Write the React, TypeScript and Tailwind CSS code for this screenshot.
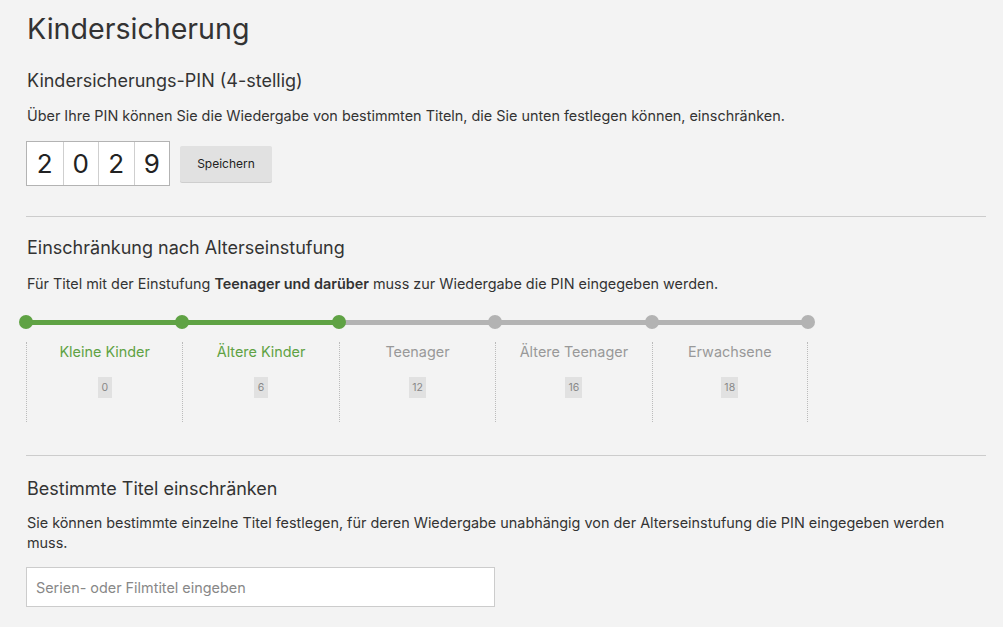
import React from "react";

const levels = [
  { label: "Kleine Kinder", age: "0", active: true },
  { label: "Ältere Kinder", age: "6", active: true },
  { label: "Teenager", age: "12", active: true },
  { label: "Ältere Teenager", age: "16", active: false },
  { label: "Erwachsene", age: "18", active: false },
];

export default function App() {
  return (
    <div className="min-h-[627px] bg-[#f3f3f3] text-[#333] font-['Inter',sans-serif]">
      <div className="w-[960px] ml-[26px] pt-[9px]">
        <h1 className="text-[28.6px] leading-[40px] font-normal text-[#333] ml-[1px]">Kindersicherung</h1>
        <h2 className="mt-[20px] text-[18px] leading-[24px] font-normal ml-[1px]">Kindersicherungs-PIN (4-stellig)</h2>
        <p className="mt-[13px] text-[14.4px] leading-[20px] ml-[1px]">
          Über Ihre PIN können Sie die Wiedergabe von bestimmten Titeln, die Sie unten festlegen können, einschränken.
        </p>
        <div className="mt-[15px] flex items-center">
          <div className="flex border border-[#b3b3b3] bg-white h-[45px]">
            {["2", "0", "2", "9"].map((d, i) => (
              <div
                key={i}
                className={`w-[35.5px] flex items-center justify-center text-[26px] text-[#222] ${i > 0 ? "border-l border-[#cfcfcf]" : ""}`}
              >
                {d}
              </div>
            ))}
          </div>
          <button className="ml-[10px] w-[92px] h-[36px] bg-[#e1e1e1] text-[12px] text-[#222] rounded-[2px] shadow-[0_1px_0_rgba(0,0,0,0.15)]">
            Speichern
          </button>
        </div>

        <div className="mt-[30px] border-t border-[#cccccc]" />

        <h2 className="mt-[19px] text-[18px] leading-[24px] font-normal ml-[1px]">Einschränkung nach Alterseinstufung</h2>
        <p className="mt-[14px] text-[14.4px] leading-[20px] ml-[1px]">
          Für Titel mit der Einstufung <b className="font-semibold">Teenager und darüber</b> muss zur Wiedergabe die PIN eingegeben werden.
        </p>

        <div className="mt-[21px] w-[782px] relative">
          <div className="h-[14px] relative">
            <div className="absolute left-0 right-0 top-[5px] h-[5px] bg-[#b3b3b3]" />
            <div className="absolute left-0 w-[313px] top-[5px] h-[5px] bg-[#5fa244]" />
            {[0, 1, 2, 3, 4, 5].map((i) => (
              <div
                key={i}
                className={`absolute top-0 w-[14px] h-[14px] rounded-full -ml-[7px] ${i <= 2 ? "bg-[#5fa244]" : "bg-[#b3b3b3]"}`}
                style={{ left: `${i * 156.4}px` }}
              />
            ))}
          </div>
          <div className="flex mt-[13px]">
            {levels.map((l, i) => (
              <div
                key={i}
                className={`w-[156.4px] h-[80px] border-l border-dotted border-[#bbb] flex flex-col items-center ${i === 4 ? "border-r" : ""}`}
              >
                <div className={`text-[14.4px] leading-[20px] ${l.active && i < 2 ? "text-[#5fa244]" : "text-[#999]"}`}>{l.label}</div>
                <div className="mt-[15px] h-[21px] min-w-[14px] px-[3px] bg-[#e1e1e1] text-[10.5px] text-[#888] flex items-center justify-center">
                  {l.age}
                </div>
              </div>
            ))}
          </div>
        </div>

        <div className="mt-[33px] border-t border-[#cccccc]" />

        <h2 className="mt-[21px] text-[18px] leading-[24px] font-normal ml-[1px]">Bestimmte Titel einschränken</h2>
        <p className="mt-[12px] text-[14.4px] leading-[20px] ml-[1px]">
          Sie können bestimmte einzelne Titel festlegen, für deren Wiedergabe unabhängig von der Alterseinstufung die PIN eingegeben werden muss.
        </p>
        <input
          className="mt-[14px] w-[469px] h-[40px] bg-white border border-[#cccccc] px-[9px] text-[14.4px] placeholder-[#888] outline-none"
          placeholder="Serien- oder Filmtitel eingeben"
        />
      </div>
    </div>
  );
}
